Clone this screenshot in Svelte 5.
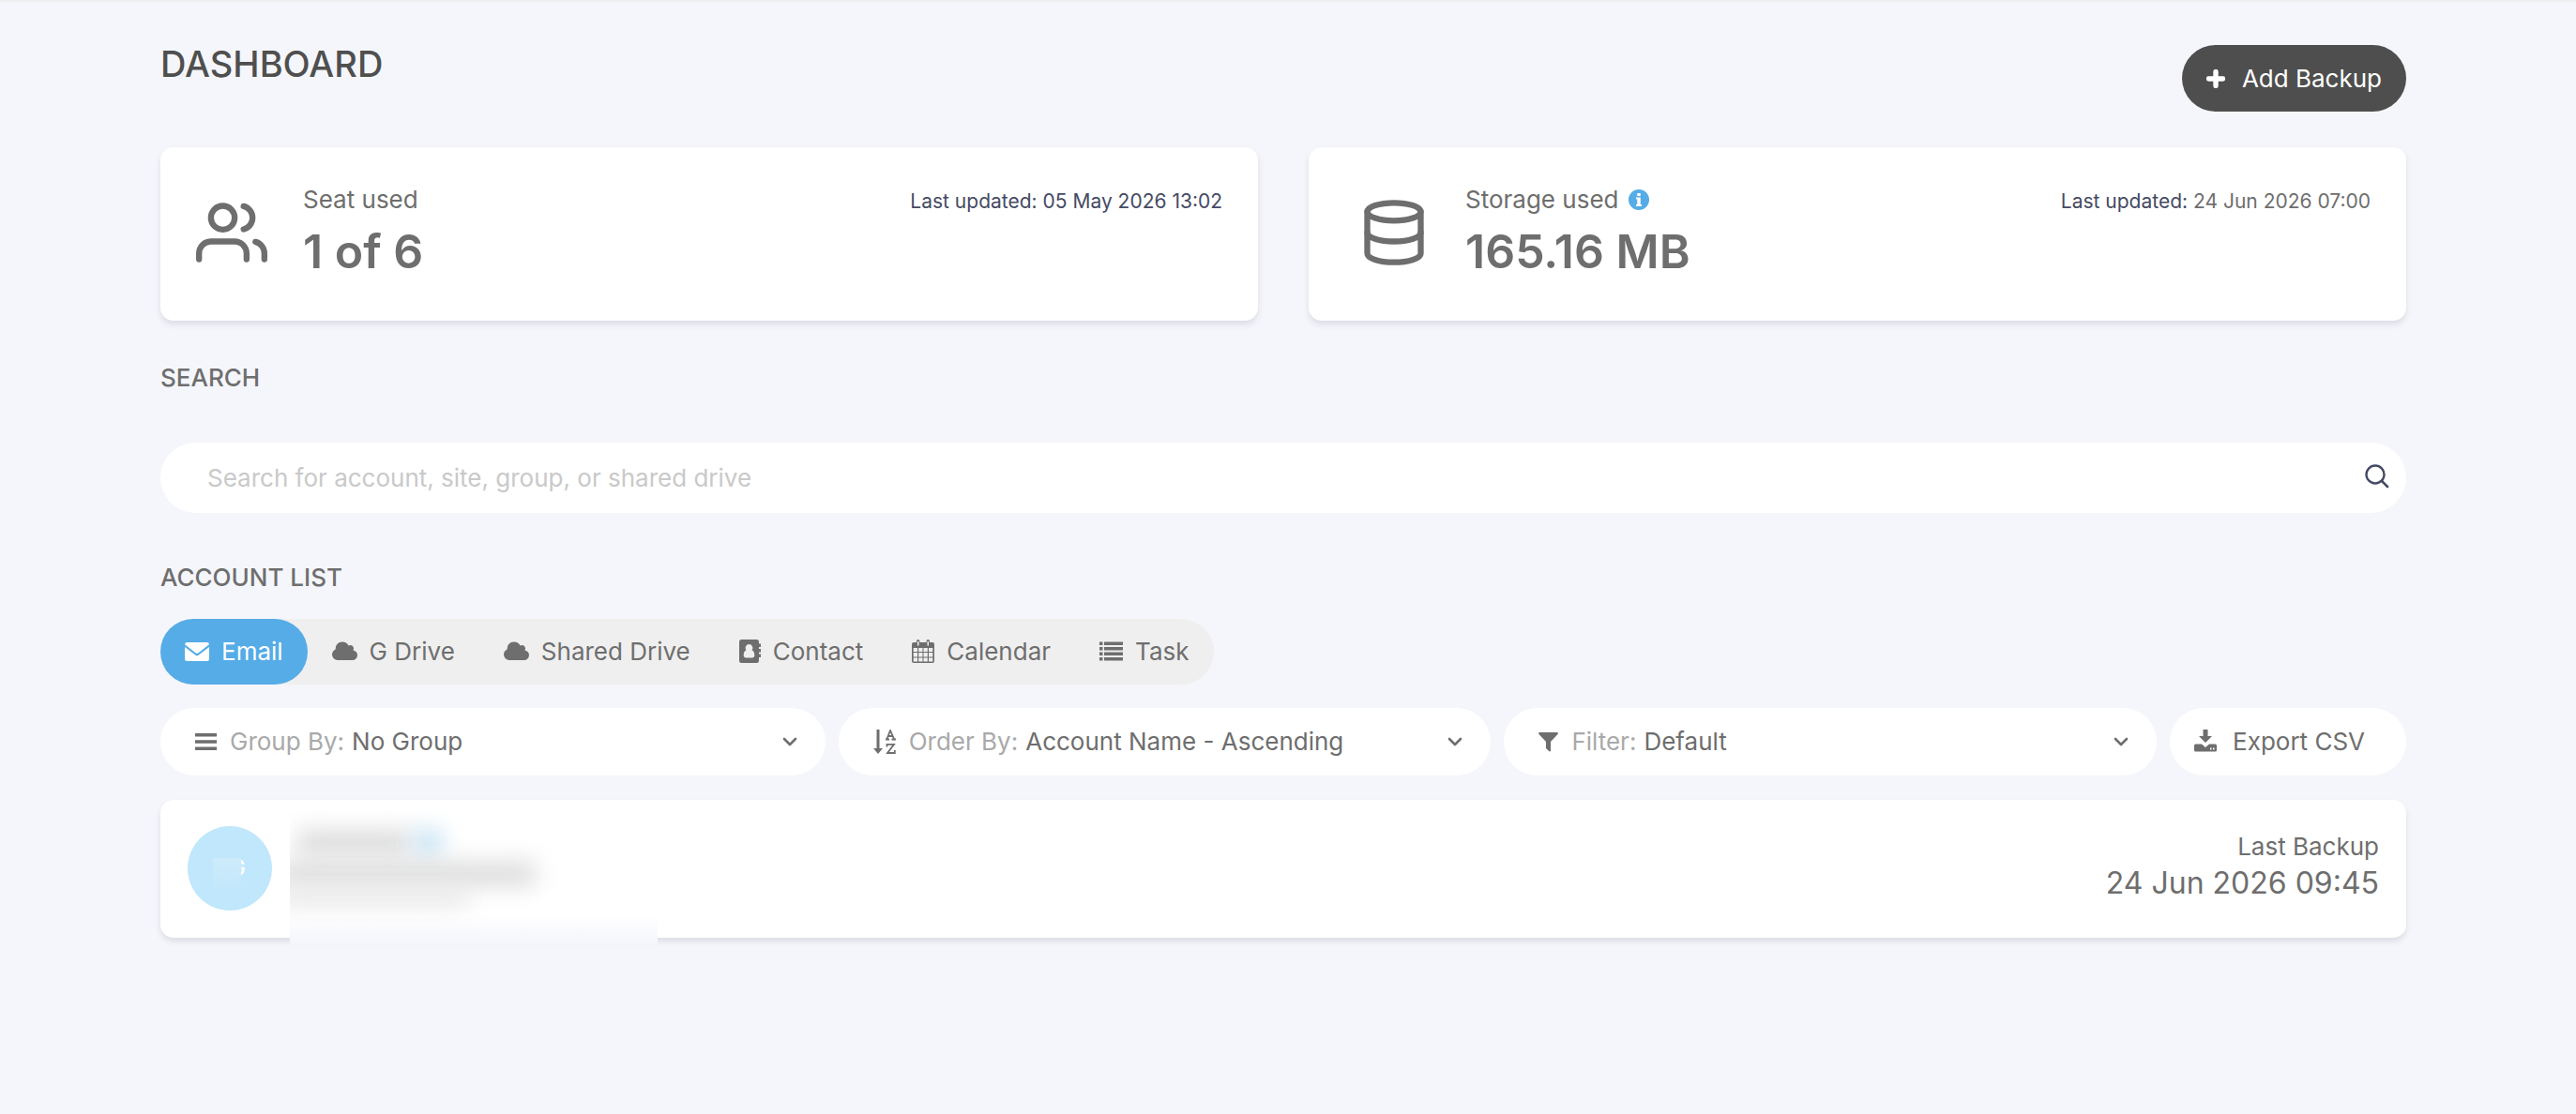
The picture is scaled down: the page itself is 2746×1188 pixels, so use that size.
<script>
  const tabs = [
    { id: 'email', label: 'Email' },
    { id: 'gdrive', label: 'G Drive' },
    { id: 'shared', label: 'Shared Drive' },
    { id: 'contact', label: 'Contact' },
    { id: 'calendar', label: 'Calendar' },
    { id: 'task', label: 'Task' }
  ];
  let active = $state('email');
  let query = $state('');
</script>

{#snippet chevron()}
  <svg class="chevron" viewBox="0 0 16 16" aria-hidden="true"><path d="M2 5l6 6 6-6" fill="none" stroke="currentColor" stroke-width="2.6" stroke-linecap="round" stroke-linejoin="round" /></svg>
{/snippet}

{#snippet tabIcon(id)}
  {#if id === 'email'}
    <svg width="26" height="26" viewBox="0 0 26 26" aria-hidden="true"><path fill="currentColor" d="M2.5 3h21A2.5 2.5 0 0 1 26 5.3L14.500 14.200q-1.500 1.100-3 0L0 5.300A2.500 2.500 0 0 1 2.500 3zM0 8l11.500 8.700q1.500 1.100 3 0L26 8v12.500a2.500 2.500 0 0 1-2.500 2.500h-21A2.500 2.500 0 0 1 0 20.500z" /></svg>
  {:else if id === 'gdrive' || id === 'shared'}
    <svg width="27" height="26" viewBox="0 0 27 26" aria-hidden="true"><path fill="currentColor" d="M6 22a6 6 0 0 1-6-6c0-2.500 1.400-4.500 3.600-5.500A7.200 7.200 0 0 1 11 2.500c3 0 5.300 1.400 6.500 4 2.500-1.500 5.500.3 5.500 3 0 .8-.2 1.500-.5 2 2.600.5 4.500 2.500 4.500 5.100A5.400 5.400 0 0 1 21.600 22z" /></svg>
  {:else if id === 'contact'}
    <svg width="23" height="26" viewBox="0 0 23 26" aria-hidden="true"><path fill="currentColor" fill-rule="evenodd" d="M2.500 0h16A2.500 2.500 0 0 1 21 2.500V4.500h1.500q1 0 1 1v1.500q0 1-1 1H21v2h1.500q1 0 1 1v1.500q0 1-1 1H21v2h1.500q1 0 1 1v1.500q0 1-1 1H21v3.500a2.500 2.500 0 0 1-2.500 2.500h-16A2.500 2.500 0 0 1 0 22.500v-20A2.500 2.500 0 0 1 2.500 0zM10.500 5a3.900 3.900 0 0 0-3 6.300C5.300 12.200 4.700 14.700 4.700 16.800c0 1.700 1 2.700 2.500 2.700h6.600c1.500 0 2.500-1 2.500-2.700 0-2.100-.6-4.600-2.800-5.500A3.900 3.900 0 0 0 10.500 5z" /></svg>
  {:else if id === 'calendar'}
    <svg width="24" height="26" viewBox="0 0 24 26" aria-hidden="true"><path fill="currentColor" fill-rule="evenodd" d="M2 3h3V2q0-2 1.700-2T8.500 2v1h7V2q0-2 1.800-2T19 2v1h3q2 0 2 2v18q0 2-2 2H2q-2 0-2-2V5q0-2 2-2zM1.700 9v4H6V9zm5.500 0v4h4.300V9zm5.300 0v4h4.300V9zM18 9v4h4.300V9zM1.700 14v4.500H6V14zm5.500 0v4.500h4.300V14zm5.300 0v4.500h4.300V14zm5.500 0v4.500h4.300V14zM1.700 19.500v4H6v-4zm5.500 0v4h4.300v-4zm5.300 0v4h4.300v-4zm5.500 0v4h4.300v-4zM6 2v4.500h1.500V2zm10.500 0v4.500H18V2z" /></svg>
  {:else}
    <svg width="25" height="26" viewBox="0 0 25 26" aria-hidden="true"><path fill="currentColor" d="M0 2.500h3.500V6H0zM5 2.500h20V6H5zM0 8h3.500v3.500H0zM5 8h20v3.500H5zM0 13.500h3.500V17H0zM5 13.500h20V17H5zM0 19h3.500v3.500H0zM5 19h20v3.500H5z" /></svg>
  {/if}
{/snippet}

<main class="page">
  <header class="top">
    <h1>DASHBOARD</h1>
    <button type="button" class="add">
      <svg width="20" height="20" viewBox="0 0 20 20" aria-hidden="true"><path d="M10 2.500v15M2.500 10h15" stroke="currentColor" stroke-width="5.400" stroke-linecap="round" /></svg>
      Add Backup
    </button>
  </header>

  <section class="stats" aria-label="Usage">
    <article class="card stat">
      <svg class="stat-icon" viewBox="0 0 24 24" aria-hidden="true"><path d="M17 21v-2a4 4 0 0 0-4-4H5a4 4 0 0 0-4 4v2" /><circle cx="9" cy="7" r="4" /><path d="M23 21v-2a4 4 0 0 0-3-3.870" /><path d="M16 3.130a4 4 0 0 1 0 7.750" /></svg>
      <div class="stat-text">
        <p class="stat-label">Seat used</p>
        <p class="stat-value">1 of 6</p>
      </div>
      <p class="updated">Last updated: 05 May 2026 13:02</p>
    </article>
    <article class="card stat storage">
      <svg class="stat-icon" viewBox="0 0 24 24" aria-hidden="true"><ellipse cx="12" cy="5" rx="9" ry="3" /><path d="M21 12c0 1.660-4 3-9 3s-9-1.340-9-3" /><path d="M3 5v14c0 1.660 4 3 9 3s9-1.340 9-3V5" /></svg>
      <div class="stat-text">
        <p class="stat-label">
          Storage used
          <svg width="22" height="22" viewBox="0 0 22 22" aria-hidden="true"><circle cx="11" cy="11" r="11" fill="#55ace6" /><path fill="#fff" d="M9.300 4h3.500v3H9.300zM8 8.600h4.800V16H14v2H8v-2h1.300v-5.400H8z" /></svg>
        </p>
        <p class="stat-value">165.16 MB</p>
      </div>
      <p class="updated">Last updated: <time>24 Jun 2026 07:00</time></p>
    </article>
  </section>

  <section>
    <h2><label for="q">SEARCH</label></h2>
    <div class="search">
      <input id="q" type="text" placeholder="Search for account, site, group, or shared drive" bind:value={query} />
      <button type="button" aria-label="Run search">
        <svg width="26" height="26" viewBox="0 0 26 26" aria-hidden="true"><circle cx="11" cy="11" r="9.500" fill="none" stroke="currentColor" stroke-width="2.400" /><path d="M18 18l6 6" stroke="currentColor" stroke-width="2.600" stroke-linecap="round" /></svg>
      </button>
    </div>
  </section>

  <section>
    <h2 class="list-title">ACCOUNT LIST</h2>
    <div class="tabs">
      {#each tabs as tab}
        <button type="button" class="tab" class:active={active === tab.id} aria-pressed={active === tab.id} onclick={() => (active = tab.id)}>
          {@render tabIcon(tab.id)}
          {tab.label}
        </button>
      {/each}
    </div>

    <div class="filters">
      <label class="pill">
        <svg width="23" height="26" viewBox="0 0 23 26" aria-hidden="true"><path fill="currentColor" d="M0 4h23v3.500H0zM0 11.300h23v3.500H0zM0 18.500h23V22H0z" /></svg>
        <span class="key">Group By:</span>
        <select><option>No Group</option></select>
        {@render chevron()}
      </label>
      <label class="pill">
        <svg width="24" height="26" viewBox="0 0 24 26" aria-hidden="true"><path fill="currentColor" d="M3.500 0h3v20H10l-5 6-5-6h3.500z" /><path fill="none" stroke="currentColor" stroke-width="1.800" d="M13 10.500h4M19.500 10.500H24M14.500 10L18 1l4 9M16 7h5M14.500 18.500v-2.700H22L15 25h7.800v-3" /></svg>
        <span class="key">Order By:</span>
        <select><option>Account Name - Ascending</option></select>
        {@render chevron()}
      </label>
      <label class="pill">
        <svg width="21" height="26" viewBox="0 0 21 26" aria-hidden="true"><path fill="currentColor" d="M1 3h19q1.500.5.5 2L13 13v9.500q-.5 1.500-1.800.6L8 20V13L.5 5Q-.5 3.500 1 3z" /></svg>
        <span class="key">Filter:</span>
        <select><option>Default</option></select>
        {@render chevron()}
      </label>
      <button type="button" class="pill export">
        <svg width="24" height="26" viewBox="0 0 24 26" aria-hidden="true"><path fill="currentColor" fill-rule="evenodd" d="M9.500 0h5v7H19l-7 7-7-7h4.500zM1.500 15.500H8l4 3.500 4-3.500h6.500q1.500 0 1.500 1.500v5q0 1.500-1.500 1.500h-21Q0 23.500 0 22v-5q0-1.500 1.500-1.500zM17 19.500v2h1.500v-2zm3 0v2h1.500v-2z" /></svg>
        Export CSV
      </button>
    </div>

    <article class="card account">
      <div class="avatar"><span>G</span></div>
      <div class="redacted" aria-hidden="true">
        <i class="name"></i><i class="badge"></i><i class="mail"></i><i class="meta"></i>
      </div>
      <div class="last">
        <p>Last Backup</p>
        <p class="when">24 Jun 2026 09:45</p>
      </div>
    </article>
  </section>
</main>

<style>
  :global(body) {
    background: #f5f6fb;
  }
  .page {
    box-sizing: border-box;
    padding: 46px 181px 48px 171px;
    border-top: 2px solid #eeeef0;
    font-family: Inter, "Open Sans", sans-serif;
    font-size: 26px;
    line-height: 32px;
    color: #6e6e6e;
  }
  h1, h2, p {
    margin: 0;
    font-weight: 400;
  }
  button, input, select {
    font: inherit;
    color: inherit;
    border: 0;
    margin: 0;
    padding: 0;
    background: none;
  }
  button {
    cursor: pointer;
  }
  svg {
    display: block;
    flex: none;
  }
  .top {
    display: flex;
    justify-content: space-between;
    align-items: flex-start;
  }
  h1 {
    font-size: 38px;
    line-height: 40px;
    font-weight: 500;
    color: #4f4f4f;
  }
  .add {
    display: flex;
    align-items: center;
    gap: 18px;
    height: 71px;
    padding: 0 26px;
    border-radius: 36px;
    background: #4e4e4e;
    color: #fff;
  }
  .card {
    background: #fff;
    border-radius: 14px;
    box-shadow: 0 4px 6px #dcdde5;
  }
  .stats {
    display: grid;
    grid-template-columns: 1fr 1fr;
    gap: 54px;
    margin-top: 38px;
  }
  .stat {
    display: flex;
    align-items: flex-start;
    gap: 38px;
    padding: 40px 38px 42px;
  }
  .storage {
    padding-left: 53px;
  }
  .stat-icon {
    width: 76px;
    height: 76px;
    margin-top: 13px;
    fill: none;
    stroke: currentColor;
    stroke-width: 2;
    stroke-linecap: round;
    stroke-linejoin: round;
  }
  .stat-label {
    display: flex;
    align-items: center;
    gap: 10px;
  }
  .stat-value {
    margin-top: 7px;
    font-size: 50px;
    line-height: 64px;
    font-weight: 600;
  }
  .updated {
    margin-left: auto;
    font-size: 21px;
    line-height: 36px;
    color: #454a63;
  }
  .updated time {
    color: #6e6e6e;
  }
  h2 {
    margin-top: 45px;
    font-size: 26px;
    font-weight: 500;
  }
  .search {
    display: flex;
    align-items: center;
    height: 75px;
    margin-top: 53px;
    padding: 0 18px 0 50px;
    border-radius: 38px;
    background: #fff;
  }
  .search input {
    flex: 1;
    outline: 0;
  }
  .search input::placeholder {
    color: #c9c9c9;
    opacity: 1;
  }
  .search button {
    padding-bottom: 4px;
    color: #454a63;
  }
  .list-title {
    margin-top: 53px;
  }
  .tabs {
    display: inline-flex;
    margin-top: 28px;
    border-radius: 35px;
    background: #efefef;
  }
  .tab {
    display: flex;
    align-items: center;
    gap: 13px;
    height: 70px;
    padding: 0 26px;
    border-radius: 35px;
  }
  .tab.active {
    background: #55ace6;
    color: #fff;
  }
  .filters {
    display: grid;
    grid-template-columns: 709fr 696fr 696fr 252fr;
    gap: 14px;
    margin-top: 25px;
  }
  .pill {
    display: flex;
    align-items: center;
    height: 72px;
    padding: 0 30px 0 37px;
    border-radius: 36px;
    background: #fff;
  }
  .key {
    margin: 0 8px 0 14px;
    color: #a9a9a9;
    white-space: nowrap;
  }
  .pill select {
    flex: 1;
    min-width: 0;
    appearance: none;
    outline: 0;
  }
  .chevron {
    width: 16px;
    height: 16px;
    pointer-events: none;
  }
  .export {
    gap: 17px;
    padding: 0 26px;
    white-space: nowrap;
  }
  .account {
    position: relative;
    display: flex;
    align-items: center;
    justify-content: space-between;
    margin-top: 26px;
    padding: 28px 29px 29px;
  }
  .avatar {
    position: relative;
    box-sizing: border-box;
    display: flex;
    align-items: center;
    justify-content: flex-end;
    width: 90px;
    height: 90px;
    padding-right: 28px;
    border-radius: 50%;
    background: #c0e7fb;
    color: #fff;
    font-size: 24px;
    font-weight: 500;
  }
  .avatar::after {
    content: "";
    position: absolute;
    left: 27px;
    top: 34px;
    width: 30px;
    height: 32px;
    background: linear-gradient(#cdebfa, #c3e8fb);
  }
  .redacted {
    position: absolute;
    left: 138px;
    top: 12px;
    bottom: -8px;
    width: 392px;
    overflow: hidden;
    background: linear-gradient(#fff 78%, #f5f6fb 97%);
  }
  .redacted i {
    position: absolute;
    filter: blur(12px);
    background: #dcdcdc;
  }
  .redacted .name { left: 8px; top: 20px; width: 120px; height: 28px; }
  .redacted .badge { left: 132px; top: 20px; width: 30px; height: 28px; background: #c4e2f4; }
  .redacted .mail { left: -12px; top: 54px; width: 274px; height: 26px; }
  .redacted .meta { left: -12px; top: 82px; width: 202px; height: 20px; background: #e8e8e8; }
  .last {
    text-align: right;
  }
  .when {
    font-size: 32px;
    line-height: 46px;
  }
</style>
